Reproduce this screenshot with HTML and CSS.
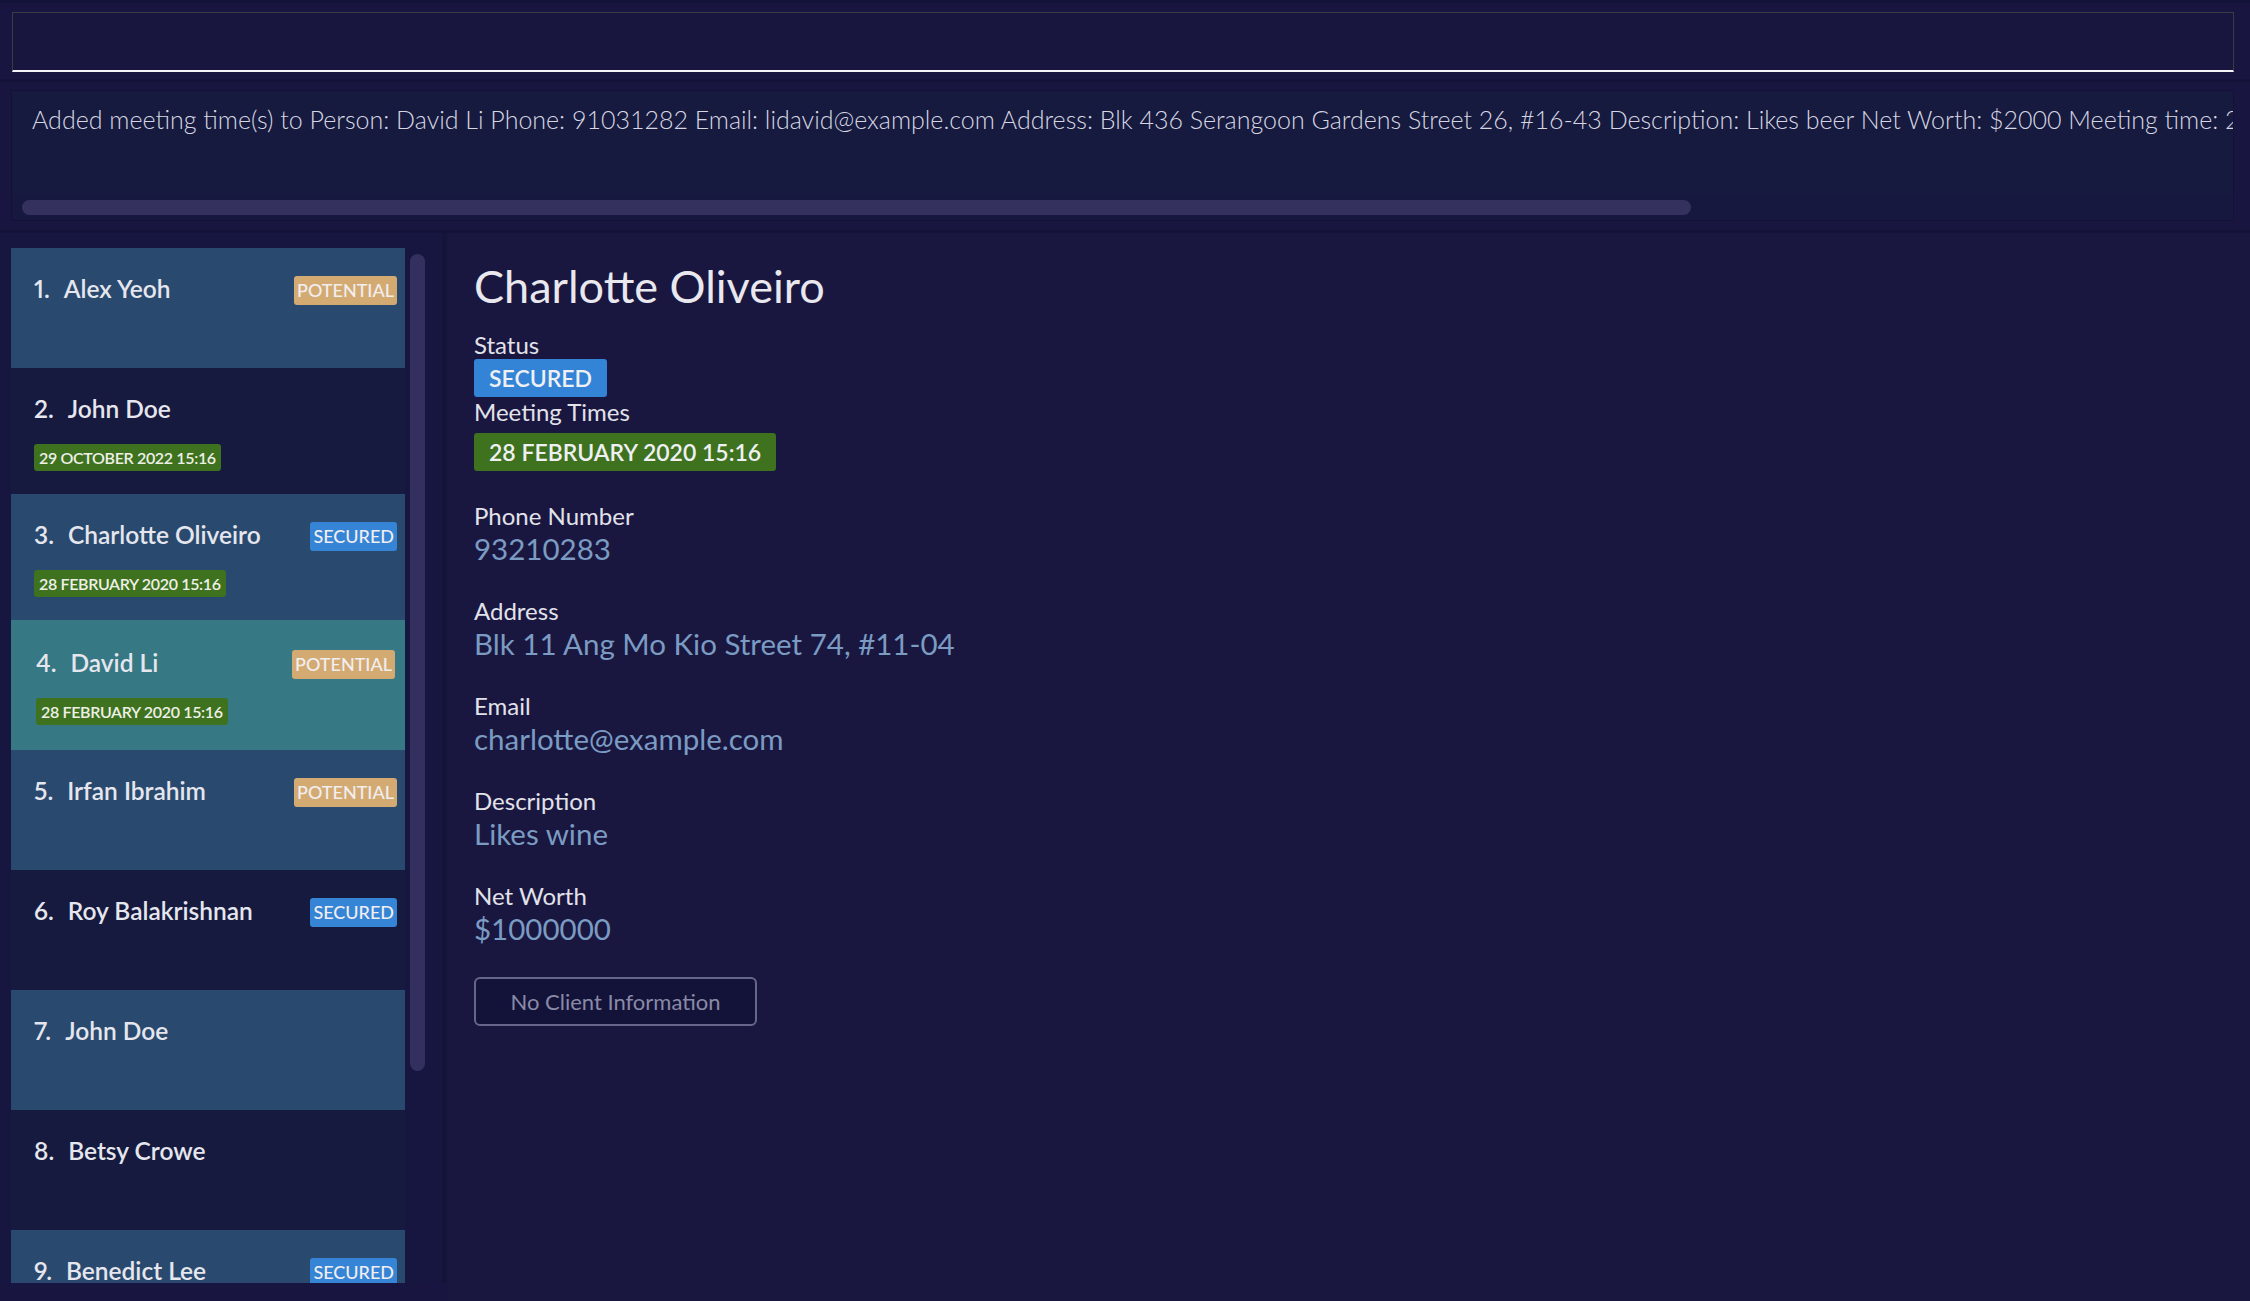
FILE: index.html
```html
<!DOCTYPE html>
<html>
<head>
<meta charset="utf-8">
<link rel="stylesheet" href="styles.css">
</head>
<body>
<div class="app">
  <div class="cmd-pane"><div class="cmd-box"></div></div>
  <div class="result-pane">
    <div class="result-box">
      <div class="result-text">Added meeting time(s) to Person: David Li Phone: 91031282 Email: lidavid@example.com Address: Blk 436 Serangoon Gardens Street 26, #16-43 Description: Likes beer Net Worth: $2000 Meeting time: 28 February 2020 15:16</div>
      <div class="hscroll"><div class="hthumb"></div></div>
    </div>
  </div>
  <div class="main">
    <div class="list-pane">
      <div class="list">
        <div class="cell odd">
          <div class="row"><div class="name"><span class="idx">1.</span>Alex Yeoh</div><span class="badge potential">POTENTIAL</span></div>
        </div>
        <div class="cell even dated">
          <div class="row"><div class="name"><span class="idx">2.</span>John Doe</div></div>
          <div class="dates"><span class="date">29 OCTOBER 2022 15:16</span></div>
        </div>
        <div class="cell odd dated">
          <div class="row"><div class="name"><span class="idx">3.</span>Charlotte Oliveiro</div><span class="badge secured">SECURED</span></div>
          <div class="dates"><span class="date">28 FEBRUARY 2020 15:16</span></div>
        </div>
        <div class="cell selected dated">
          <div class="row"><div class="name"><span class="idx">4.</span>David Li</div><span class="badge potential">POTENTIAL</span></div>
          <div class="dates"><span class="date">28 FEBRUARY 2020 15:16</span></div>
        </div>
        <div class="cell odd">
          <div class="row"><div class="name"><span class="idx">5.</span>Irfan Ibrahim</div><span class="badge potential">POTENTIAL</span></div>
        </div>
        <div class="cell even">
          <div class="row"><div class="name"><span class="idx">6.</span>Roy Balakrishnan</div><span class="badge secured">SECURED</span></div>
        </div>
        <div class="cell odd">
          <div class="row"><div class="name"><span class="idx">7.</span>John Doe</div></div>
        </div>
        <div class="cell even">
          <div class="row"><div class="name"><span class="idx">8.</span>Betsy Crowe</div></div>
        </div>
        <div class="cell odd">
          <div class="row"><div class="name"><span class="idx">9.</span>Benedict Lee</div><span class="badge secured">SECURED</span></div>
        </div>
      </div>
      <div class="vscroll"><div class="vthumb"></div></div>
    </div>
    <div class="detail-pane">
      <div class="d-name">Charlotte Oliveiro</div>
      <div class="d-label first">Status</div>
      <div class="d-badge secured-big">SECURED</div>
      <div class="d-label mt">Meeting Times</div>
      <div class="d-badge date-big">28 FEBRUARY 2020 15:16</div>
      <div class="field">
        <div class="d-label">Phone Number</div>
        <div class="d-value">93210283</div>
      </div>
      <div class="field">
        <div class="d-label">Address</div>
        <div class="d-value">Blk 11 Ang Mo Kio Street 74, #11-04</div>
      </div>
      <div class="field">
        <div class="d-label">Email</div>
        <div class="d-value">charlotte@example.com</div>
      </div>
      <div class="field">
        <div class="d-label">Description</div>
        <div class="d-value">Likes wine</div>
      </div>
      <div class="field">
        <div class="d-label">Net Worth</div>
        <div class="d-value">$1000000</div>
      </div>
      <div class="info-btn">No Client Information</div>
    </div>
  </div>
</div>
</body>
</html>
```
FILE: styles.css
```css
html, body {
  margin: 0;
  padding: 0;
  background: #181640;
  font-family: "Lato", "Open Sans", sans-serif;
}
.app {
  width: 2250px;
  height: 1301px;
  overflow: hidden;
  display: flex;
  flex-direction: column;
  background: #181640;
  box-sizing: border-box;
  border-top: 3px solid #131238;
}
.cmd-pane {
  padding: 9px 16px 7px 12px;
  border-bottom: 3px solid #131238;
}
.cmd-box {
  height: 60px;
  box-sizing: border-box;
  border: 1px solid #3b3b44;
  border-bottom: 2px solid #f4f4f8;
  background: #18163f;
}
.result-pane {
  padding: 8px 16px 9px 11px;
  border-bottom: 3px solid #131238;
}
.result-box {
  height: 131px;
  box-sizing: border-box;
  border: 1px solid #131236;
  background: #171840;
  display: flex;
  flex-direction: column;
}
.result-text {
  height: 103px;
  box-sizing: border-box;
  background: #161a3e;
  padding: 13px 0 0 20px;
  font-size: 25px;
  line-height: 30px;
  font-weight: 300;
  color: #d6d6e2;
  white-space: nowrap;
  overflow: hidden;
}
.hscroll {
  padding: 6px 0 0 10px;
}
.hthumb {
  width: 1669px;
  height: 15px;
  border-radius: 8px;
  background: #34315f;
}
.main {
  flex: 1;
  display: flex;
  min-height: 0;
}
.list-pane {
  width: 447px;
  flex: none;
  box-sizing: border-box;
  padding: 15px 0 0 11px;
  display: flex;
  align-items: flex-start;
  gap: 5px;
  border-right: 5px solid #141338;
  background: #171640;
  height: 1050px;
}
.list {
  width: 394px;
  height: 1035px;
  overflow: hidden;
  flex: none;
}
.vscroll {
  margin-top: 6px;
  width: 15px;
}
.vthumb {
  width: 15px;
  height: 817px;
  border-radius: 8px;
  background: #33305f;
}
.cell {
  box-sizing: border-box;
  min-height: 120px;
  padding: 28px 8px 23px 23px;
}
.cell.odd { background: #294a6e; }
.cell.even { background: #151a3e; }
.cell.selected {
  background: #367884;
  padding: 30px 10px 25px 25px;
}
.row {
  display: flex;
  justify-content: space-between;
  align-items: flex-start;
  height: 29px;
}
.name {
  font-size: 24.5px;
  line-height: 26px;
  font-weight: 600;
  color: #e6e6ee;
  white-space: nowrap;
  font-variant-numeric: proportional-nums;
}
.idx {
  display: inline-block;
  margin-right: 14px;
}
.badge {
  height: 29px;
  box-sizing: border-box;
  padding: 0 3px;
  border-radius: 3px;
  font-size: 18px;
  line-height: 29px;
  font-weight: 500;
  color: #f1eef0;
}
.potential { background: #d4aa73; }
.secured { background: #3584d6; }
.dates {
  margin-top: 19px;
  display: flex;
}
.date {
  height: 27px;
  box-sizing: border-box;
  padding: 0 5px;
  border-radius: 3px;
  background: #3e721e;
  font-size: 16px;
  letter-spacing: -0.35px;
  line-height: 27px;
  font-weight: 600;
  color: #eef0e8;
}
.detail-pane {
  flex: 1;
  background: #191740;
  padding: 26px 0 0 27px;
  box-sizing: border-box;
  display: flex;
  flex-direction: column;
  align-items: flex-start;
}
.d-name {
  font-size: 45px;
  line-height: 55px;
  font-weight: 400;
  color: #e8e8ee;
}
.d-label {
  font-size: 24px;
  line-height: 27px;
  color: #e2e2ea;
}
.d-label.first { margin-top: 17px; }
.d-label.mt { margin-top: 1px; }
.d-badge {
  height: 38px;
  box-sizing: border-box;
  padding: 0 15px;
  border-radius: 3px;
  font-size: 23px;
  line-height: 38px;
  font-weight: 600;
  color: #eef0f4;
  margin-top: 1px;
}
.secured-big { background: #3383d6; }
.date-big { background: #3e721e; margin-top: 8px; }
.field {
  margin-top: 31px;
  display: flex;
  flex-direction: column;
  align-items: flex-start;
}
.d-value {
  margin-top: 2px;
  font-size: 29.5px;
  line-height: 35px;
  color: #7b9bc2;
}
.info-btn {
  margin-top: 31px;
  width: 283px;
  height: 49px;
  box-sizing: border-box;
  border: 2px solid #66668a;
  border-radius: 6px;
  background: #13133a;
  color: #8a8aa6;
  font-size: 22px;
  line-height: 45px;
  text-align: center;
}
```
